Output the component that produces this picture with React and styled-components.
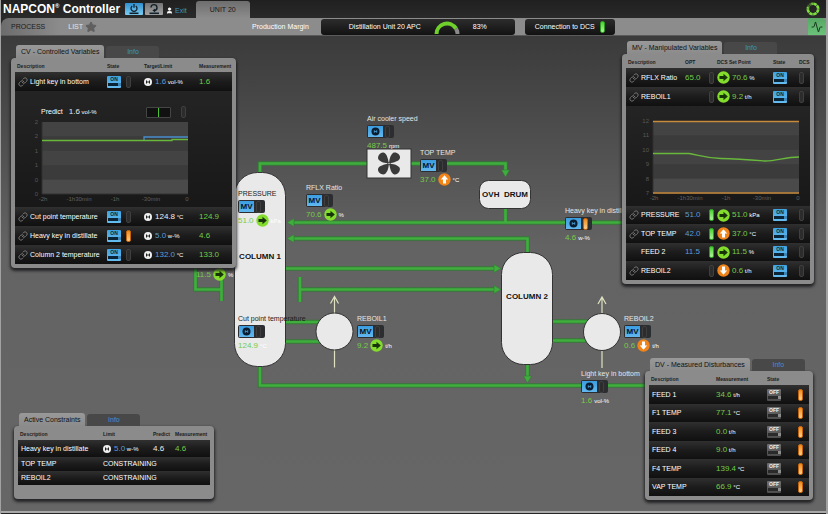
import styled, { createGlobalStyle } from "styled-components";
import { Link, User, Star, Activity } from "lucide-react";

const GlobalStyle = createGlobalStyle`
  * {
    box-sizing: border-box;
  }
  body {
    margin: 0;
    background: #262626;
    color: white;
    font-family: "Liberation Sans", Arial, sans-serif;
    font-size: 7px;
    line-height: 10px;
  }
  button {
    font: inherit;
    color: inherit;
    border: none;
    padding: 0;
    background: none;
    cursor: pointer;
  }
`;

const lamps = {
  off: { edge: "#3f3f3f", fill: "#2c2c2c" },
  green: { edge: "#2f9a22", fill: "linear-gradient(#48d332, #aef59a)" },
  orange: { edge: "#c0640f", fill: "linear-gradient(#f08a1c, #ffd08a)" },
};

const blue = "#5b9bd8";

const Page = styled.div`
  display: flex;
  flex-direction: column;
  min-height: 100vh;
  border-left: 1px solid #a2a2a2;
  border-right: 2px solid #a2a2a2;
`;

const Header = styled.header`
  display: flex;
  align-items: center;
  height: 18px;
  padding: 0 6px 0 2px;
  background: linear-gradient(#202020, #2a2a2a);
`;

const Title = styled.h1`
  margin: 0 5px 0 0;
  font-size: 12px;
  line-height: 18px;
  font-weight: bold;
  white-space: nowrap;
  sup {
    font-size: 6px;
    line-height: 0;
    vertical-align: 5px;
  }
`;

const HeadButton = styled.button`
  display: flex;
  align-items: center;
  justify-content: center;
  width: 18px;
  height: 12px;
  margin-right: 2px;
  border-radius: 1px;
  color: #12222c;
  background: ${(p) =>
    p.$active
      ? "linear-gradient(#2f8fd0, #7ccdf2)"
      : "linear-gradient(#747474, #a5a5a5)"};
`;

const Exit = styled.a`
  display: flex;
  align-items: center;
  gap: 2px;
  margin: 3px 9px 0 1px;
  color: #3d93cc;
  text-decoration: none;
  svg {
    color: white;
  }
`;

const UnitTab = styled.button`
  align-self: flex-end;
  width: 54px;
  height: 17px;
  margin-right: auto;
  border-radius: 3px 3px 0 0;
  color: #1a1a1a;
  background: linear-gradient(#6e6e6e, #8c8c8c);
`;

const Toolbar = styled.nav`
  display: flex;
  align-items: stretch;
  height: 18px;
  padding-left: 10px;
  border-radius: 8px 0 0 0;
  border-bottom: 1px solid #5a5a5a;
  background: linear-gradient(90deg, #6c6c6c, #8c8c8c 60px);
`;

const NavItems = styled.div`
  display: flex;
  align-items: center;
  gap: 23px;
  flex: 0 0 241px;
`;

const NavButton = styled.button`
  display: flex;
  align-items: center;
  gap: 2px;
  color: ${(p) => (p.$active ? "#1c1c1c" : "#e4e4e4")};
`;

const BarLabel = styled.span`
  align-self: center;
  margin-right: 12px;
  white-space: nowrap;
`;

const Pill = styled.div`
  display: flex;
  align-items: center;
  gap: ${(p) => p.$gap}px;
  padding: 0 ${(p) => p.$pad}px;
  margin: 1px 10px 0 0;
  border-radius: 3px;
  white-space: nowrap;
  background: linear-gradient(#2c2c2c, #121212);
`;

const TrendTab = styled.button`
  display: flex;
  align-items: center;
  justify-content: center;
  width: 18px;
  margin-left: auto;
  border-radius: 0 5px 0 0;
  color: #163a1c;
  background: linear-gradient(#58a765, #6cc27a);
`;

const Canvas = styled.main`
  position: relative;
  flex: 1;
  min-height: 475px;
  overflow: hidden;
  border-bottom: 2px solid #a8a8a8;
  margin-bottom: 1px;
  background: linear-gradient(#3b3b3b, #636363 210px, #666);
`;

const Stage = styled.div`
  position: relative;
  width: 825px;
  margin: 0 auto;
`;

const Drawing = styled.svg`
  display: block;
  font-size: 8px;
  font-weight: bold;
`;

const Node = styled.div`
  position: absolute;
  left: ${(p) => p.$x}px;
  top: ${(p) => p.$y}px;
  color: ${(p) => (p.$dark ? "#1c1c1c" : "#e6e6e6")};
  white-space: pre;
`;

const NodeTag = styled.button`
  display: flex;
  align-items: center;
  gap: 2px;
  width: 27px;
  height: 13px;
  margin-top: 1px;
  padding: 1px;
  border-radius: 2px;
  background: #2b2d30;
`;

const TagFace = styled.span`
  display: flex;
  align-items: center;
  justify-content: center;
  width: 15px;
  height: 11px;
  color: #06121c;
  font-size: 8px;
  font-weight: bold;
  background: linear-gradient(#3b9de0, #62b8ee);
`;

const Reading = styled.div`
  display: flex;
  align-items: center;
  gap: 2px;
  height: 15px;
`;

const Value = styled.span`
  font-size: 8px;
  color: ${(p) => p.$color || "#74cc48"};
`;

const Unit = styled.span`
  font-size: 6px;
  color: white;
`;

const Lamp = styled.i`
  display: block;
  flex: none;
  width: 5px;
  height: 12px;
  border-radius: 2px;
  border: 1px solid ${(p) => lamps[p.$state].edge};
  background: ${(p) => lamps[p.$state].fill};
`;

const Window = styled.section`
  position: absolute;
  top: ${(p) => p.$top}px;
  ${(p) => p.$side}: ${(p) => p.$inset}px;
  width: ${(p) => p.$width}px;
`;

const Tabs = styled.div`
  display: flex;
  align-items: flex-end;
  gap: 2px;
  padding-left: 5px;
`;

const Tab = styled.button`
  height: 13px;
  padding: 1px 5px 0;
  border-radius: 3px 3px 0 0;
  color: #111;
  white-space: nowrap;
  background: linear-gradient(#999, #8b8b8b);
`;

const InfoTab = styled.button`
  width: 53px;
  height: 12px;
  border-radius: 3px 3px 0 0;
  color: #3d93cc;
  background: #484848;
`;

const Body = styled.div`
  padding: 0 4px ${(p) => p.$foot || 4}px;
  border-radius: 4px;
  background: #8b8b8b;
  box-shadow: 0 2px 3px 1px rgba(20, 20, 24, 0.8);
`;

const Table = styled.table`
  width: 100%;
  table-layout: fixed;
  border-collapse: collapse;
  th {
    height: 14px;
    padding: 2px 0 0;
    color: #1c1c1c;
    font-size: 5px;
    line-height: 8px;
    text-align: left;
    white-space: nowrap;
  }
  th:first-child {
    padding-left: 2px;
  }
  td {
    padding: 0;
    white-space: nowrap;
  }
`;

const Row = styled.tr`
  height: ${(p) => p.$h}px;
  background: linear-gradient(#303030, #1c1c1c 50%, #101010);
`;

const ChartCell = styled.td`
  background: linear-gradient(#242424, #181818);
`;

const Name = styled.div`
  display: flex;
  align-items: center;
  gap: 2px;
  padding-left: 3px;
  svg {
    color: #858585;
  }
`;

const Cells = styled.div`
  display: flex;
  align-items: center;
  gap: ${(p) => p.$gap || 3}px;
`;

const Switch = styled.button`
  display: flex;
  flex-direction: column;
  align-items: center;
  width: 14px;
  height: 12px;
  padding-top: 1px;
  border-radius: 1px;
  color: ${(p) => (p.$on ? "#0b2436" : "#efefef")};
  font-size: 5px;
  font-weight: bold;
  line-height: 5px;
  background: ${(p) =>
    p.$on
      ? "linear-gradient(#3fa3e4, #66bdf0)"
      : "linear-gradient(#6f6f6f, #4c4c4c)"};
  &::after {
    content: "";
    width: 10px;
    height: 3px;
    margin-top: 1px;
    border-right: 3px solid ${(p) => (p.$on ? "#3d86b5" : "#8e8e8e")};
    background: ${(p) => (p.$on ? "#0b2436" : "#2a2a2a")};
  }
`;

const PredictBar = styled.div`
  display: flex;
  align-items: center;
  height: 12px;
  margin: 15px 0 0 26px;
`;

const PredictValue = styled.div`
  width: 77px;
  margin-left: 6px;
`;

const Deviation = styled.div`
  width: 25px;
  height: 11px;
  margin-right: 10px;
  border: 1px solid #454545;
  border-radius: 1px;
  background: linear-gradient(90deg, #111 11px, #4dc234 11px, #4dc234 12px, #111 12px);
`;

const ChartSvg = styled.svg`
  display: block;
  font-size: 6px;
`;

const PowerIcon = () => (
  <svg width="12" height="12" viewBox="0 0 12 12" fill="none" stroke="currentColor">
    <path d="M4.2 3A3 3 0 1 0 7.8 3M6 1V4.8" strokeWidth="1.3" />
    <path d="M1.5 10.3H10.5" strokeWidth="1.6" />
  </svg>
);

const RedoIcon = () => (
  <svg width="12" height="12" viewBox="0 0 12 12" fill="none" stroke="currentColor">
    <path d="M3 4.6A3 3 0 1 1 6.6 7.6" strokeWidth="1.4" />
    <path d="M7.2 5.6L4.4 7.6L7.2 9.4Z" fill="currentColor" stroke="none" />
    <path d="M1.5 10.3H11" strokeWidth="1.6" />
  </svg>
);

const DirIcon = ({ dir }) => {
  const turn = { right: 0, up: -90, down: 90 }[dir];
  const steady = dir === "right";
  return (
    <svg width="13" height="13" viewBox="0 0 13 13">
      <circle cx="6.5" cy="6.5" r="6.2" fill={steady ? "#84dc2c" : "#f08418"} />
      <path
        d="M2.5 5H6.5V2.8L10.8 6.5L6.5 10.2V8H2.5Z"
        fill={steady ? "#16330a" : "#fff"}
        transform={`rotate(${turn} 6.5 6.5)`}
      />
    </svg>
  );
};

const LimitIcon = () => (
  <svg width="8" height="8" viewBox="0 0 8 8">
    <circle cx="4" cy="4" r="4" fill="#eee" />
    <path d="M2.5 2.5V5.5M5.5 2.5V5.5M2.5 4H5.5" stroke="#222" strokeWidth="1" />
  </svg>
);

const TargetIcon = () => (
  <svg width="9" height="9" viewBox="0 0 9 9">
    <circle cx="4.5" cy="4.5" r="4" fill="#0a1d30" />
    <path d="M3.3 3.2V5.8M5.7 3.2V5.8M3.3 4.5H5.7" stroke="#4ba6df" strokeWidth="0.8" />
  </svg>
);

const Gauge = () => (
  <svg width="26" height="14" viewBox="0 0 26 14" fill="none" strokeWidth="4">
    <path d="M22 8.6A10.5 10.5 0 0 1 23.5 14" stroke="#8a8a8a" />
    <path d="M2.5 14A10.5 10.5 0 0 1 22 8.6" stroke="#6fd02c" />
  </svg>
);

const Spinner = () => (
  <svg width="14" height="14" viewBox="0 0 14 14" fill="none" strokeWidth="2.6">
    <circle cx="7" cy="7" r="5.2" stroke="#3f5a3a" />
    <circle
      cx="7"
      cy="7"
      r="5.2"
      stroke="#7fe03c"
      strokeDasharray="3.3 0.78"
      pathLength="32.64"
      transform="rotate(-85 7 7)"
    />
    <path d="M7 7L0 4.5V0H5Z" fill="#262626" stroke="none" opacity="0.6" />
  </svg>
);

const Measure = ({ value, unit, color }) => (
  <>
    <Value $color={color}>{value}</Value>
    {unit && <Unit> {unit}</Unit>}
  </>
);

const Instrument = ({ x, y, label, value, unit, dir, mv, lamp = "off", dark }) => (
  <Node $x={x} $y={y} $dark={dark}>
    {label}
    {label && (
      <NodeTag aria-label={label}>
        <TagFace>{mv ? "MV" : <TargetIcon />}</TagFace>
        <Lamp $state={lamp} />
      </NodeTag>
    )}
    <Reading>
      <Value>{value}</Value>
      {dir && <DirIcon dir={dir} />}
      <Unit>{unit}</Unit>
    </Reading>
  </Node>
);

const instruments = [
  { x: 366, y: 78, label: "Air cooler speed", value: "487.5", unit: "rpm" },
  { x: 419, y: 112, label: "TOP TEMP", value: "37.0", unit: "°C", dir: "up", mv: true },
  { x: 305, y: 147, label: "RFLX Ratio", value: "70.6", unit: "%", dir: "right", mv: true },
  { x: 237, y: 153, label: "PRESSURE", value: "51.0", unit: "kPa", dir: "right", mv: true, dark: true },
  { x: 195, y: 231, value: "11.5", unit: "%", dir: "right" },
  { x: 237, y: 278, label: "Cut point temperature", value: "124.9", unit: "°C", dark: true },
  { x: 356, y: 278, label: "REBOIL1", value: "9.2", unit: "t/h", dir: "right", mv: true },
  { x: 623, y: 278, label: "REBOIL2", value: "0.6", unit: "t/h", dir: "down", mv: true },
  { x: 564, y: 170, label: "Heavy key in distillate", value: "4.6", unit: "w-%", lamp: "orange" },
  { x: 580, y: 333, label: "Light key in bottom", value: "1.6", unit: "vol-%" },
];

const pipes = [
  "M260 173V163.5H368",
  "M410 163.5H505.5V172",
  "M505.5 207V222.5",
  "M292 222.5H646",
  "M292 238.5H527.5V253",
  "M285 268.5H496",
  "M300 277V302M300 289.5H496",
  "M195.5 260V289.5H221.5M221.5 277V301",
  "M285 322H320M285 341.5H320",
  "M552 321.5H588M552 340.5H588",
  "M260 365V385.5H650",
  "M527.5 363V378",
];

const heads = [
  [505.5, 177, 90],
  [287, 222.5, 180],
  [287, 238.5, 180],
  [501, 268.5, 0],
  [501, 289.5, 0],
  [527.5, 383, 90],
];

const Reboiler = ({ x, y }) => (
  <g>
    <path
      d={`M${x} ${y + 36}V${y - 35}M${x - 4} ${y - 28}L${x} ${y - 35}L${x + 4} ${y - 28}`}
      fill="none"
      stroke="#dfe2c0"
      strokeWidth="1.2"
    />
    <circle cx={x} cy={y} r="18.5" fill="#e9e9e9" stroke="#333" />
  </g>
);

const Process = () => (
  <Drawing width="825" height="475" viewBox="1 36 825 475">
    <g fill="none">
      {pipes.map((d) => (
        <path key={d} d={d} stroke="#347a35" strokeWidth="4.4" />
      ))}
      {pipes.map((d) => (
        <path key={d} d={d} stroke="#40ae3e" strokeWidth="2.6" />
      ))}
    </g>
    {heads.map(([x, y, turn]) => (
      <path
        key={`${x}-${y}`}
        d="M0 0L-7 -4V4Z"
        fill="#40ae3e"
        stroke="#347a35"
        strokeWidth="0.6"
        transform={`translate(${x} ${y}) rotate(${turn})`}
      />
    ))}
    <g fill="#e9e9e9" stroke="#333">
      <rect x="234.5" y="172.5" width="51" height="194" rx="23" />
      <rect x="501.5" y="252.5" width="51" height="112" rx="22" />
      <rect x="479.5" y="180.5" width="51" height="28" rx="9" />
      <rect x="367" y="149" width="44" height="29" />
    </g>
    <Reboiler x={334.5} y={331.5} />
    <Reboiler x={602} y={332} />
    <g fill="#3a3a3a" transform="translate(389 163.5)">
      {[0, 90, 180, 270].map((turn) => (
        <path
          key={turn}
          d="M0 0C0.5 -4 1 -8 4 -10.5C7 -12 11.500 -9 11 -5.5C10 -2 5 -1.200 0 0Z"
          transform={`rotate(${turn})`}
        />
      ))}
      <circle r="1.6" />
      <circle r="0.8" fill="#ccc" />
    </g>
    <g fill="#111" textAnchor="middle">
      <text x="260" y="259">COLUMN 1</text>
      <text x="527" y="299">COLUMN 2</text>
      <text x="505" y="197" xmlSpace="preserve">OVH  DRUM</text>
    </g>
  </Drawing>
);

const Chart = ({ width, height, top, labels, children }) => (
  <ChartSvg width={width} height={height} viewBox={`0 0 ${width} ${height}`}>
    <rect x="27" y={top} width="146" height="72" fill="#3b3b3b" />
    {[0, 2, 4].map((band) => (
      <rect
        key={band}
        x="27"
        y={top + band * 14.4}
        width="146"
        height="14.4"
        fill={band === 4 ? "#4a4a4a" : "#434343"}
      />
    ))}
    <path d={`M27 ${top}V${top + 72}H173`} fill="none" stroke="#303030" />
    <g fill="#585858" textAnchor="end">
      {labels.map((text, i) => (
        <text key={i} x="23" y={top + 2 + i * 14.4}>
          {text}
        </text>
      ))}
    </g>
    <g fill="#606060" textAnchor="middle">
      {["-2h", "-1h30min", "-1h", "-30min", "0"].map((text, i) => (
        <text key={text} x={28 + i * 36} y={top + 79}>
          {text}
        </text>
      ))}
    </g>
    <g transform={`translate(27 ${top})`} fill="none" strokeWidth="1.3">
      {children}
    </g>
  </ChartSvg>
);

const Panel = ({ title, cols, foot, top, side, inset, width, children }) => (
  <Window $top={top} $side={side} $inset={inset} $width={width}>
    <Tabs>
      <Tab>{title}</Tab>
      <InfoTab>Info</InfoTab>
    </Tabs>
    <Body $foot={foot}>
      <Table>
        <colgroup>
          {cols.map(([, colWidth], i) => (
            <col key={i} width={colWidth} />
          ))}
        </colgroup>
        <thead>
          <tr>
            {cols.map(([head], i) => (
              <th key={i}>{head}</th>
            ))}
          </tr>
        </thead>
        <tbody>{children}</tbody>
      </Table>
    </Body>
  </Window>
);

const ControlledRow = ({ name, target, unit, color, measured, lamp = "off" }) => (
  <Row $h={19}>
    <td>
      <Name>
        <Link size={10} strokeWidth={2} />
        {name}
      </Name>
    </td>
    <td>
      <Cells $gap={5}>
        <Switch $on>ON</Switch>
        <Lamp $state={lamp} />
      </Cells>
    </td>
    <td>
      <Cells>
        <LimitIcon />
        <span>
          <Measure value={target} unit={unit} color={color} />
        </span>
      </Cells>
    </td>
    <td>
      <Value>{measured}</Value>
    </td>
  </Row>
);

const ManipulatedRow = ({ h, name, linked = true, opt, optColor, lamp = "off", dir, value, unit }) => (
  <Row $h={h}>
    <td>
      <Name>
        {linked ? <Link size={10} strokeWidth={2} /> : <svg width="10" height="10" />}
        {name}
      </Name>
    </td>
    <td>
      <Value $color={optColor}>{opt}</Value>
    </td>
    <td>
      <Lamp $state={lamp} />
    </td>
    <td>
      <Cells $gap={2}>
        <DirIcon dir={dir} />
        <span>
          <Measure value={value} unit={unit} />
        </span>
      </Cells>
    </td>
    <td>
      <Switch $on>ON</Switch>
    </td>
    <td>
      <Lamp $state="off" />
    </td>
  </Row>
);

const disturbances = [
  ["FEED 1", "34.6", "t/h"],
  ["F1 TEMP", "77.1", "°C"],
  ["FEED 3", "0.0", "t/h"],
  ["FEED 4", "9.0", "t/h"],
  ["F4 TEMP", "139.4", "°C"],
  ["VAP TEMP", "66.9", "°C"],
];

const App = () => {
  return (
    <>
      <GlobalStyle />
      <Page>
        <Header>
          <Title>
            NAPCON<sup>®</sup> Controller
          </Title>
          <HeadButton $active aria-label="Power">
            <PowerIcon />
          </HeadButton>
          <HeadButton aria-label="Reload">
            <RedoIcon />
          </HeadButton>
          <Exit href="#">
            <User size={7} strokeWidth={3} fill="white" />
            Exit
          </Exit>
          <UnitTab>UNIT 20</UnitTab>
          <Spinner />
        </Header>
        <Toolbar>
          <NavItems>
            <NavButton $active>PROCESS</NavButton>
            <NavButton>
              LIST
              <Star size={12} fill="#5f5f5f" stroke="#5f5f5f" />
            </NavButton>
          </NavItems>
          <BarLabel>Production Margin</BarLabel>
          <Pill $gap={13} $pad={28}>
            Distillation Unit 20 APC
            <Gauge />
            83%
          </Pill>
          <Pill $gap={5} $pad={10}>
            Connection to DCS
            <Lamp $state="green" />
          </Pill>
          <TrendTab aria-label="Trends">
            <Activity size={12} strokeWidth={2} />
          </TrendTab>
        </Toolbar>
        <Canvas>
          <Stage>
            <Process />
            {instruments.map((item) => (
              <Instrument key={`${item.x}-${item.y}`} {...item} />
            ))}
          </Stage>

          <Panel
            title="CV - Controlled Variables"
            top={9}
            side="left"
            inset={10}
            width={225}
            cols={[["Description", 92], ["State", 37], ["Target/Limit", 55], ["Measurement"]]}
          >
            <ControlledRow name="Light key in bottom" target="1.6" unit="vol-%" color={blue} measured="1.6" />
            <tr>
              <ChartCell colSpan={4}>
                <PredictBar>
                  Predict
                  <PredictValue>
                    <Measure value="1.6" unit="vol-%" color="#e8e8e8" />
                  </PredictValue>
                  <Deviation />
                  <Lamp $state="off" />
                </PredictBar>
                <Chart width={217} height={89} top={4} labels={[2, 2, 1, 1, 0, 0]}>
                  <path d="M102 18V15H146" stroke="#4a8fd0" />
                  <path d="M0 18.5H130V17.5H146" stroke="#68b83c" />
                </Chart>
              </ChartCell>
            </tr>
            <ControlledRow name="Cut point temperature" target="124.8" unit="°C" color="#f0f0f0" measured="124.9" />
            <ControlledRow
              name="Heavy key in distillate"
              target="5.0"
              unit="w-%"
              color={blue}
              measured="4.6"
              lamp="orange"
            />
            <ControlledRow name="Column 2 temperature" target="132.0" unit="°C" color={blue} measured="133.0" />
          </Panel>

          <Panel
            title="MV - Manipulated Variables"
            top={5}
            side="right"
            inset={12}
            width={192}
            cols={[
              ["Description", 59],
              ["OPT", 24],
              ["", 8],
              ["DCS Set Point", 56],
              ["State", 26],
              ["DCS"],
            ]}
          >
            <ManipulatedRow h={19} name="RFLX Ratio" opt="65.0" dir="right" value="70.6" unit="%" />
            <ManipulatedRow h={19} name="REBOIL1" dir="right" value="9.2" unit="t/h" />
            <tr>
              <ChartCell colSpan={6}>
                <Chart width={184} height={100} top={15} labels={[12, 11, 10, 9, 8, 7]}>
                  <path d="M0 0.5H146M0 72H146" stroke="#c88a3c" />
                  <path
                    d="M0 32.5H36C46 34 52 37 68 37.500S98 39 112 40C124 40 132 36 146 36"
                    stroke="#68b83c"
                  />
                </Chart>
              </ChartCell>
            </tr>
            <ManipulatedRow
              h={18}
              name="PRESSURE"
              opt="51.0"
              optColor={blue}
              lamp="green"
              dir="right"
              value="51.0"
              unit="kPa"
            />
            <ManipulatedRow
              h={19}
              name="TOP TEMP"
              opt="42.0"
              optColor={blue}
              lamp="green"
              dir="up"
              value="37.0"
              unit="°C"
            />
            <ManipulatedRow
              h={18}
              name="FEED 2"
              linked={false}
              opt="11.5"
              optColor={blue}
              lamp="green"
              dir="right"
              value="11.5"
              unit="%"
            />
            <ManipulatedRow h={19} name="REBOIL2" dir="down" value="0.6" unit="t/h" />
          </Panel>

          <Panel
            title="Active Constraints"
            top={377}
            side="left"
            inset={13}
            width={200}
            foot={14}
            cols={[["Description", 85], ["Limit", 50], ["Predict", 22], ["Measurement"]]}
          >
            <Row $h={17}>
              <td>
                <Name>Heavy key in distillate</Name>
              </td>
              <td>
                <Cells>
                  <LimitIcon />
                  <span>
                    <Measure value="5.0" unit="w-%" color={blue} />
                  </span>
                </Cells>
              </td>
              <td>
                <Value $color="#f0f0f0">4.6</Value>
              </td>
              <td>
                <Value>4.6</Value>
              </td>
            </Row>
            {["TOP TEMP", "REBOIL2"].map((name) => (
              <Row key={name} $h={14}>
                <td>
                  <Name>{name}</Name>
                </td>
                <td colSpan={3}>CONSTRAINING</td>
              </Row>
            ))}
          </Panel>

          <Panel
            title="DV - Measured Disturbances"
            top={322}
            side="right"
            inset={13}
            width={168}
            cols={[["Description", 67], ["Measurement", 51], ["State", 31], [""]]}
          >
            {disturbances.map(([name, value, unit], i) => (
              <Row key={name} $h={i % 2 ? 18 : 19}>
                <td>
                  <Name>{name}</Name>
                </td>
                <td>
                  <Measure value={value} unit={unit} />
                </td>
                <td>
                  <Switch>OFF</Switch>
                </td>
                <td>
                  <Lamp $state="orange" />
                </td>
              </Row>
            ))}
          </Panel>
        </Canvas>
      </Page>
    </>
  );
};

export default App;
